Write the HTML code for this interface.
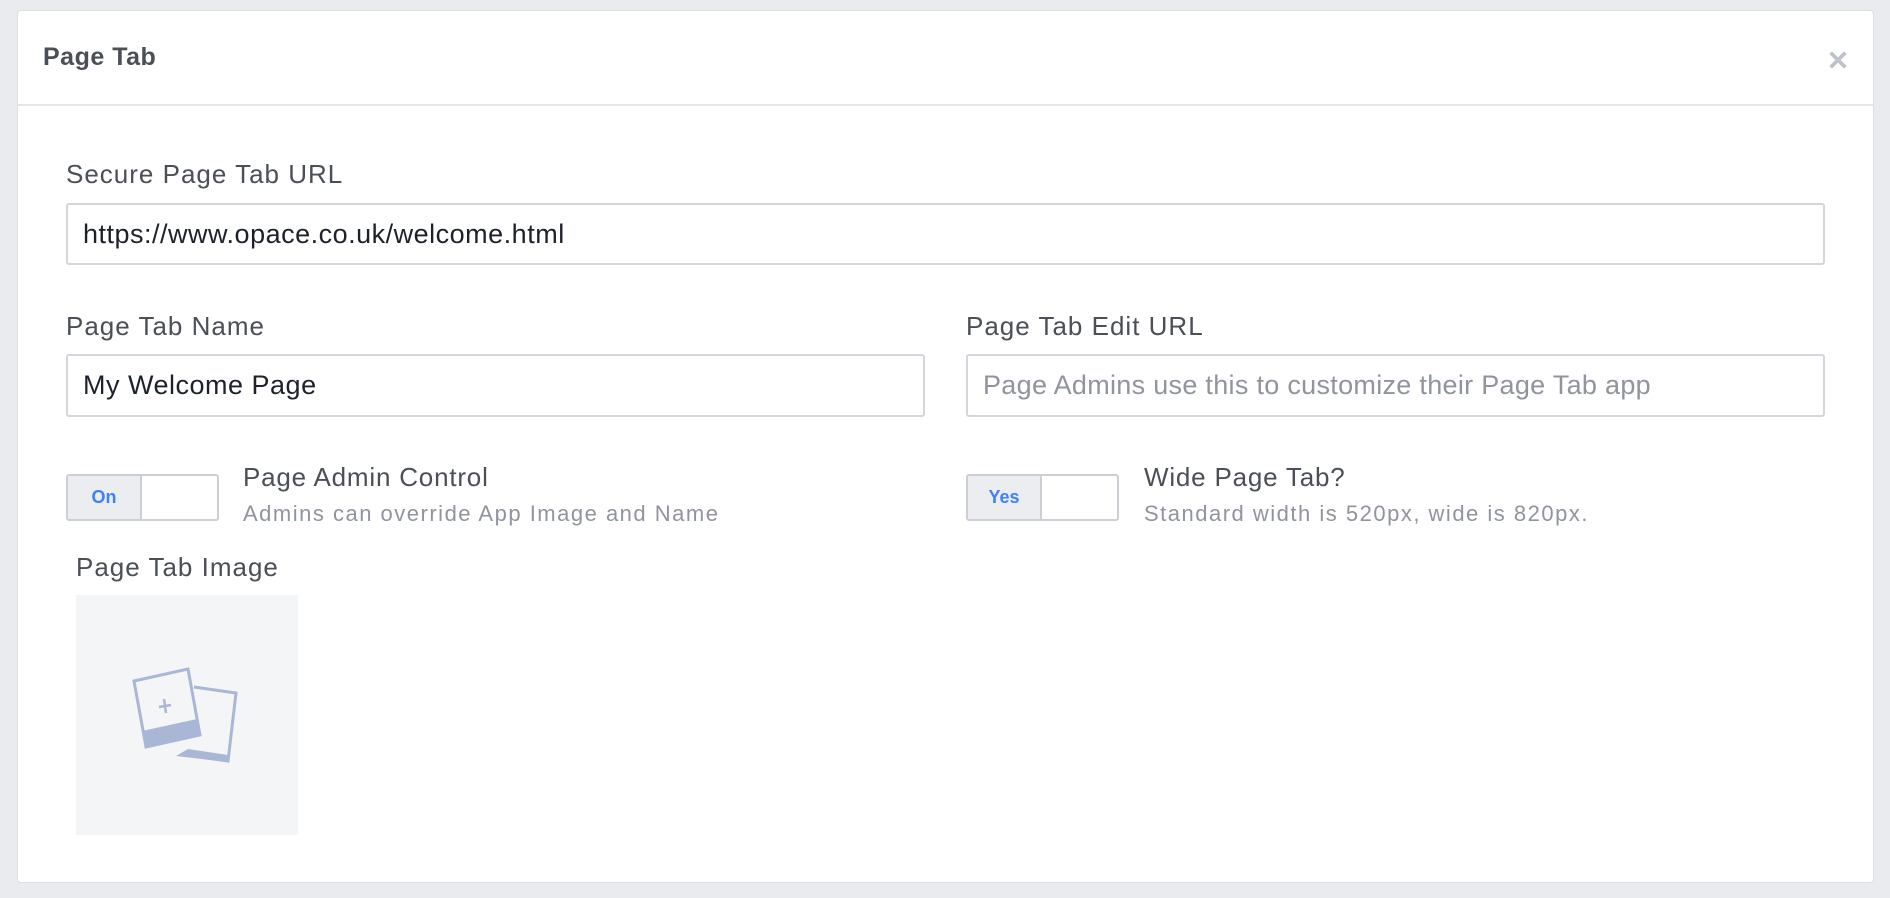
<!DOCTYPE html>
<html><head><meta charset="utf-8"><style>
*{box-sizing:border-box;margin:0;padding:0}
body{width:1890px;height:898px;background:#e9ebee;font-family:"Liberation Sans",Helvetica,Arial,sans-serif;position:relative;overflow:hidden}
.panel{position:absolute;left:17px;top:10px;width:1857px;height:873px;background:#fff;border:1px solid #dddfe2;border-radius:4px}
.hdr{position:absolute;left:0;top:0;width:100%;height:95px;border-bottom:2px solid #e5e5e5}
.title{position:absolute;left:25px;top:32px;font-size:25px;letter-spacing:0.5px;font-weight:bold;color:#4b4f56}
.x{position:absolute;left:1809px;top:38px;width:22px;height:22px}
.a{position:absolute;white-space:nowrap}
.lbl{font-size:26px;letter-spacing:1px;color:#4b4f56}
.sub{font-size:22px;letter-spacing:1.5px;color:#90949c}
.inp{position:absolute;border:2px solid #d3d6db;border-radius:3px;background:#fff;font-size:27px;letter-spacing:0.5px;color:#1d2129;padding-left:15px;display:flex;align-items:center}
.tg{position:absolute;width:153px;height:47px;border:2px solid #ccd0d5;border-radius:3px;background:#fff;overflow:hidden}
.tg .l{position:absolute;left:0;top:0;bottom:0;width:74px;background:#ebedf0;border-right:2px solid #ccd0d5;color:#4080ff;font-weight:bold;font-size:18px;display:flex;align-items:center;justify-content:center}
</style></head><body>
<div class="panel">
 <div class="hdr"><div class="title">Page Tab</div>
 <svg class="x" viewBox="0 0 24 24"><path d="M4 4L20 20M20 4L4 20" stroke="#bec2c9" stroke-width="4"/></svg></div>
</div>
<div class="a lbl" style="left:66px;top:159px">Secure Page Tab URL</div>
<div class="inp" style="left:66px;top:203px;width:1759px;height:62px">https://www.opace.co.uk/welcome.html</div>
<div class="a lbl" style="left:66px;top:311px">Page Tab Name</div>
<div class="inp" style="left:66px;top:354px;width:859px;height:63px">My Welcome Page</div>
<div class="a lbl" style="left:966px;top:311px">Page Tab Edit URL</div>
<div class="inp" style="left:966px;top:354px;width:859px;height:63px;color:#90949c;letter-spacing:0.3px">Page Admins use this to customize their Page Tab app</div>
<div class="tg" style="left:66px;top:474px"><div class="l">On</div></div>
<div class="a lbl" style="left:243px;top:462px;letter-spacing:0.8px">Page Admin Control</div>
<div class="a sub" style="left:243px;top:501px">Admins can override App Image and Name</div>
<div class="tg" style="left:966px;top:474px"><div class="l">Yes</div></div>
<div class="a lbl" style="left:1144px;top:462px;letter-spacing:0.8px">Wide Page Tab?</div>
<div class="a sub" style="left:1144px;top:501px">Standard width is 520px, wide is 820px.</div>
<div class="a lbl" style="left:76px;top:552px">Page Tab Image</div>
<div class="a" style="left:76px;top:595px;width:222px;height:240px;background:#f4f5f7">
<svg width="222" height="240" viewBox="0 0 222 240">
 <g fill="none" stroke="#a9b6d6" stroke-width="3">
  <path d="M118 92 L160 98 L152 166 L110 160" />
  <path d="M58 86 L112 74 L124 140 L70 152 Z"/>
 </g>
 <path d="M66 136 L121 124 L124 140 L70 152 Z" fill="#a9b6d6"/>
 <path d="M112 154 L152 160 L151 167 L100 161 Z" fill="#a9b6d6"/>
 <path d="M83 112 L95 110 M88 104 L90 118" stroke="#a9b6d6" stroke-width="2.5"/>
</svg></div>
</body></html>
